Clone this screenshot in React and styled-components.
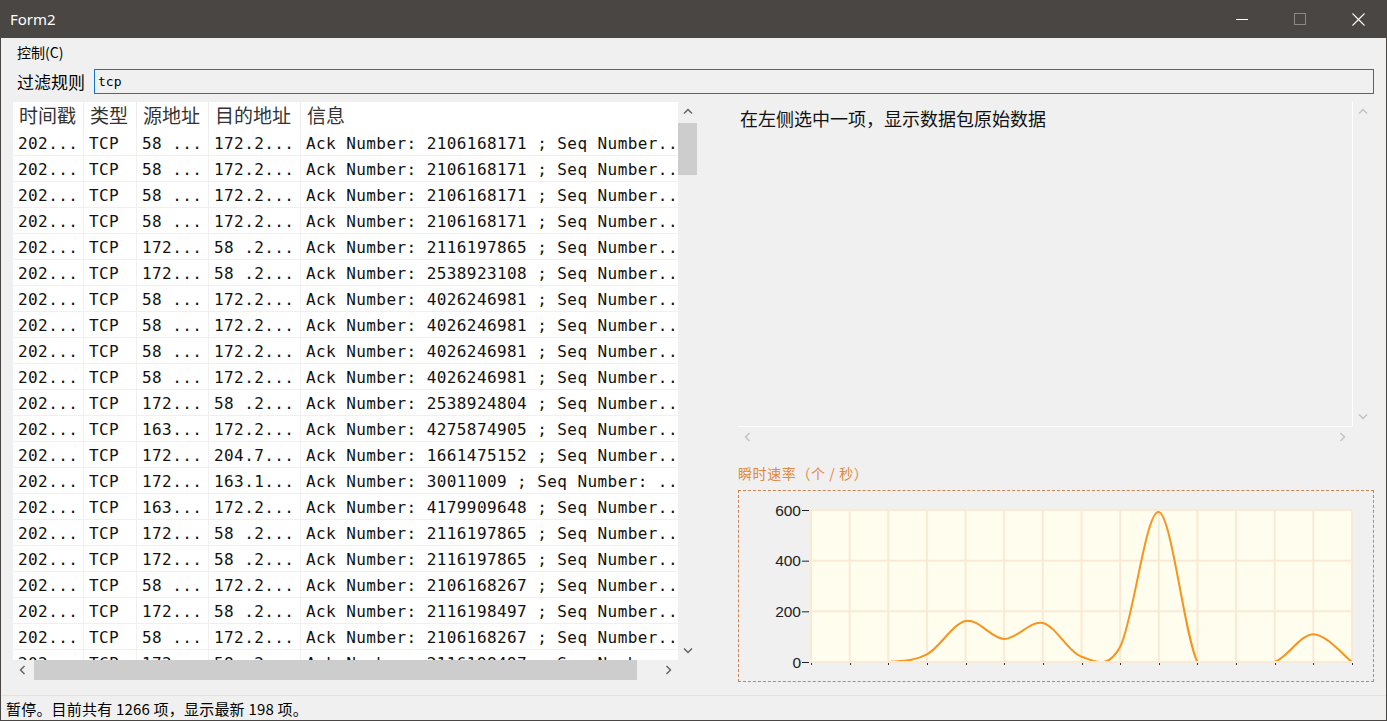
import React from 'react';
import styled, { createGlobalStyle } from 'styled-components';

const GlobalStyle = createGlobalStyle`
  html, body {
    margin: 0;
    padding: 0;
    background: #f0f0f0;
  }
  body {
    font-family: "Noto Sans CJK SC", "Noto Sans", sans-serif;
    overflow: hidden;
  }
`;

// window frame
const Window = styled.div`
  width: 1387px;
  height: 721px;
  box-sizing: border-box;
  border: 1px solid #4a4643;
  border-top: none;
  background: #f0f0f0;
  display: flex;
  flex-direction: column;
  overflow: hidden;
`;

const TitleBar = styled.div`
  height: 38px;
  flex: none;
  margin: 0 -1px;
  background: #4a4643;
  display: flex;
  align-items: center;
`;

const TitleText = styled.div`
  flex: 1;
  padding-left: 10px;
  color: #fff;
  font-family: "Noto Sans", "Open Sans", sans-serif;
  font-size: 15px;
`;

const TitleButton = styled.div`
  width: 58px;
  height: 38px;
  display: flex;
  align-items: center;
  justify-content: center;
`;

const MenuBar = styled.div`
  height: 28px;
  flex: none;
  display: flex;
  align-items: center;
  padding-left: 16px;
  font-size: 14px;
  color: #000;
`;

const FilterRow = styled.div`
  flex: none;
  display: flex;
  align-items: center;
  padding: 3px 12px 0 16px;
`;

const FilterLabel = styled.div`
  width: 77px;
  font-size: 17px;
  color: #000;
`;

const FilterInput = styled.div`
  flex: 1;
  height: 25px;
  box-sizing: border-box;
  border: 1px solid #0a78cf;
  background: #f0f0f0;
  padding-left: 3px;
  display: flex;
  align-items: center;
  font-family: "DejaVu Sans Mono", "Liberation Mono", monospace;
  font-size: 13px;
  color: #000;
`;

const Main = styled.div`
  flex: none;
  display: flex;
  gap: 41px;
  margin-top: 8px;
  padding-left: 12px;
  height: 580px;
`;

// left list view
const ListPanel = styled.div`
  width: 684px;
  height: 578px;
  display: grid;
  grid-template-columns: 665px 19px;
  grid-template-rows: 558px 20px;
`;

const Viewport = styled.div`
  background: #fff;
  overflow: hidden;
`;

const cols = '71px 53px 72px 92px 377px';

const HeaderRow = styled.div`
  display: grid;
  grid-template-columns: ${cols};
  height: 28px;
`;

const HeaderCell = styled.div`
  padding-left: 6px;
  font-size: 19px;
  line-height: 25px;
  color: #333;
  white-space: nowrap;
  overflow: hidden;
  border-right: ${({ last }) => (last ? 'none' : '1px solid #ececec')};
`;

const Row = styled.div`
  display: grid;
  grid-template-columns: ${cols};
  height: 26px;
  box-sizing: border-box;
  border-bottom: 1px solid #f0f0f0;
`;

const Cell = styled.div`
  padding: 2px 0 0 5px;
  font-family: "DejaVu Sans Mono", "Liberation Mono", monospace;
  font-size: 16px;
  letter-spacing: 0.42px;
  line-height: 23px;
  color: #111;
  white-space: nowrap;
  overflow: hidden;
  border-right: ${({ last }) => (last ? 'none' : '1px solid #f0f0f0')};
`;

const VScroll = styled.div`
  background: #f0f0f0;
  display: flex;
  flex-direction: column;
  box-sizing: border-box;
  border-left: ${({ edge }) => (edge ? '1px solid #fff' : 'none')};
`;

const HScroll = styled.div`
  background: #f0f0f0;
  display: flex;
  align-items: stretch;
  box-sizing: border-box;
  border-top: ${({ edge }) => (edge ? '1px solid #fff' : 'none')};
`;

const ArrowBox = styled.div`
  flex: none;
  width: ${({ w }) => w || 19}px;
  height: ${({ h }) => h || 20}px;
  display: flex;
  align-items: center;
  justify-content: center;
`;

const VThumb = styled.div`
  margin-top: 1px;
  height: 52px;
  background: #cdcdcd;
`;

const HThumb = styled.div`
  margin-left: 1px;
  width: 603px;
  background: #cdcdcd;
`;

const Spacer = styled.div`
  flex: 1;
`;

const Corner = styled.div`
  background: #f0f0f0;
`;

// right side
const RightColumn = styled.div`
  width: 636px;
  display: flex;
  flex-direction: column;
`;

const RawPanel = styled.div`
  width: 634px;
  height: 344px;
  display: grid;
  grid-template-columns: 614px 20px;
  grid-template-rows: 324px 20px;
`;

const RawText = styled.div`
  padding: 4px 2px;
  font-size: 18px;
  line-height: 24px;
  color: #111;
`;

const ChartLabel = styled.div`
  margin-top: 18px;
  font-size: 14px;
  letter-spacing: 0.6px;
  line-height: 18px;
  color: #e0883c;
`;

const ChartBox = styled.div`
  margin-top: 8px;
  width: 636px;
  height: 192px;
  box-sizing: border-box;
  border: 1px dashed #c98454;
`;

const StatusBar = styled.div`
  margin-top: auto;
  height: 25px;
  flex: none;
  box-sizing: border-box;
  border-top: 1px solid #e2e2e2;
  padding-left: 5px;
  display: flex;
  align-items: center;
  font-size: 15px;
  letter-spacing: 0.2px;
  color: #000;
`;

const Chevron = ({ dir, color = '#606060' }) => {
  const pts = {
    up: '1,6.5 5,2.5 9,6.5',
    down: '1,3.5 5,7.5 9,3.5',
    left: '6.5,1 2.5,5 6.5,9',
    right: '3.5,1 7.5,5 3.5,9',
  }[dir];
  return (
    <svg width="10" height="10" viewBox="0 0 10 10">
      <polyline points={pts} fill="none" stroke={color} strokeWidth="1.4" />
    </svg>
  );
};

const rows = [
  ['202...', 'TCP', '58 ...', '172.2...', 'Ack Number: 2106168171 ; Seq Number..'],
  ['202...', 'TCP', '58 ...', '172.2...', 'Ack Number: 2106168171 ; Seq Number..'],
  ['202...', 'TCP', '58 ...', '172.2...', 'Ack Number: 2106168171 ; Seq Number..'],
  ['202...', 'TCP', '58 ...', '172.2...', 'Ack Number: 2106168171 ; Seq Number..'],
  ['202...', 'TCP', '172...', '58 .2...', 'Ack Number: 2116197865 ; Seq Number..'],
  ['202...', 'TCP', '172...', '58 .2...', 'Ack Number: 2538923108 ; Seq Number..'],
  ['202...', 'TCP', '58 ...', '172.2...', 'Ack Number: 4026246981 ; Seq Number..'],
  ['202...', 'TCP', '58 ...', '172.2...', 'Ack Number: 4026246981 ; Seq Number..'],
  ['202...', 'TCP', '58 ...', '172.2...', 'Ack Number: 4026246981 ; Seq Number..'],
  ['202...', 'TCP', '58 ...', '172.2...', 'Ack Number: 4026246981 ; Seq Number..'],
  ['202...', 'TCP', '172...', '58 .2...', 'Ack Number: 2538924804 ; Seq Number..'],
  ['202...', 'TCP', '163...', '172.2...', 'Ack Number: 4275874905 ; Seq Number..'],
  ['202...', 'TCP', '172...', '204.7...', 'Ack Number: 1661475152 ; Seq Number..'],
  ['202...', 'TCP', '172...', '163.1...', 'Ack Number: 30011009 ; Seq Number: ..'],
  ['202...', 'TCP', '163...', '172.2...', 'Ack Number: 4179909648 ; Seq Number..'],
  ['202...', 'TCP', '172...', '58 .2...', 'Ack Number: 2116197865 ; Seq Number..'],
  ['202...', 'TCP', '172...', '58 .2...', 'Ack Number: 2116197865 ; Seq Number..'],
  ['202...', 'TCP', '58 ...', '172.2...', 'Ack Number: 2106168267 ; Seq Number..'],
  ['202...', 'TCP', '172...', '58 .2...', 'Ack Number: 2116198497 ; Seq Number..'],
  ['202...', 'TCP', '58 ...', '172.2...', 'Ack Number: 2106168267 ; Seq Number..'],
  ['202...', 'TCP', '172...', '58 .2...', 'Ack Number: 2116198497 ; Seq Number..'],
];

const headers = ['时间戳', '类型', '源地址', '目的地址', '信息'];

// rate chart
const rates = [0, 0, 0, 30, 162, 91, 154, 21, 60, 592, 0, 0, 0, 110, 0];
const PX0 = 72;
const PX1 = 613;
const PY0 = 19;
const PY1 = 171;
const step = (PX1 - PX0) / (rates.length - 1);
const px = (i) => PX0 + i * step;
const py = (v) => PY1 - (v * (PY1 - PY0)) / 600;

function splinePath(vals) {
  const pts = vals.map((v, i) => [px(i), py(v)]);
  let d = `M${pts[0][0]},${pts[0][1]}`;
  for (let i = 0; i < pts.length - 1; i++) {
    const p0 = pts[i - 1] || pts[i];
    const p1 = pts[i];
    const p2 = pts[i + 1];
    const p3 = pts[i + 2] || p2;
    const c1 = [p1[0] + (p2[0] - p0[0]) / 6, p1[1] + (p2[1] - p0[1]) / 6];
    const c2 = [p2[0] - (p3[0] - p1[0]) / 6, p2[1] - (p3[1] - p1[1]) / 6];
    d += ` C${c1[0]},${c1[1]} ${c2[0]},${c2[1]} ${p2[0]},${p2[1]}`;
  }
  return d;
}

function RateChart() {
  const yTicks = [600, 400, 200, 0];
  return (
    <svg width="634" height="190" viewBox="0 0 634 190">
      <defs>
        <clipPath id="plotClip">
          <rect x={PX0} y={0} width={PX1 - PX0} height={PY1 - 1} />
        </clipPath>
      </defs>
      <rect x={PX0} y={PY0} width={PX1 - PX0} height={PY1 - PY0} fill="#fffdee" />
      {rates.map((_, i) => (
        <line key={'v' + i} x1={px(i)} x2={px(i)} y1={PY0} y2={PY1} stroke="#f8ead5" strokeWidth="2" />
      ))}
      {yTicks.map((t) => (
        <line key={'h' + t} x1={PX0} x2={PX1} y1={py(t)} y2={py(t)} stroke="#f8ead5" strokeWidth="2" />
      ))}
      {yTicks.map((t) => (
        <g key={'t' + t}>
          <text
            x="62"
            y={py(t) + 5.5}
            textAnchor="end"
            fontFamily="Liberation Sans, Arial, sans-serif"
            fontSize="15.5"
            fill="#222"
          >
            {t}
          </text>
          <line x1="63" x2="70" y1={py(t) + 0.5} y2={py(t) + 0.5} stroke="#222" strokeWidth="1" />
        </g>
      ))}
      {rates.map((_, i) => (
        <line key={'x' + i} x1={Math.round(px(i)) + 0.5} x2={Math.round(px(i)) + 0.5} y1={172} y2={174} stroke="#333" strokeWidth="1" />
      ))}
      <path d={splinePath(rates)} fill="none" stroke="#f7941d" strokeWidth="2" clipPath="url(#plotClip)" />
    </svg>
  );
}

export default function App() {
  return (
    <>
      <GlobalStyle />
      <Window>
        <TitleBar>
          <TitleText>Form2</TitleText>
          <TitleButton>
            <svg width="12" height="12" viewBox="0 0 12 12">
              <line x1="0" x2="12" y1="6.5" y2="6.5" stroke="#fff" strokeWidth="1" />
            </svg>
          </TitleButton>
          <TitleButton>
            <svg width="12" height="12" viewBox="0 0 12 12">
              <rect x="0.5" y="0.5" width="11" height="11" fill="none" stroke="#8c8a88" strokeWidth="1" />
            </svg>
          </TitleButton>
          <TitleButton>
            <svg width="13" height="13" viewBox="0 0 13 13">
              <path d="M0.5 0.5 L12.5 12.5 M12.5 0.5 L0.5 12.5" stroke="#fff" strokeWidth="1.1" />
            </svg>
          </TitleButton>
        </TitleBar>

        <MenuBar>控制(C)</MenuBar>

        <FilterRow>
          <FilterLabel>过滤规则</FilterLabel>
          <FilterInput>tcp</FilterInput>
        </FilterRow>

        <Main>
          <ListPanel>
            <Viewport>
              <HeaderRow>
                {headers.map((h, i) => (
                  <HeaderCell key={h} last={i === headers.length - 1}>
                    {h}
                  </HeaderCell>
                ))}
              </HeaderRow>
              {rows.map((r, ri) => (
                <Row key={ri}>
                  {r.map((c, ci) => (
                    <Cell key={ci} last={ci === r.length - 1}>
                      {c}
                    </Cell>
                  ))}
                </Row>
              ))}
            </Viewport>
            <VScroll>
              <ArrowBox>
                <Chevron dir="up" />
              </ArrowBox>
              <VThumb />
              <Spacer />
              <ArrowBox>
                <Chevron dir="down" />
              </ArrowBox>
            </VScroll>
            <HScroll>
              <ArrowBox w={20} h={20}>
                <Chevron dir="left" />
              </ArrowBox>
              <HThumb />
              <Spacer />
              <ArrowBox w={20} h={20}>
                <Chevron dir="right" />
              </ArrowBox>
            </HScroll>
            <Corner />
          </ListPanel>

          <RightColumn>
            <RawPanel>
              <RawText>在左侧选中一项，显示数据包原始数据</RawText>
              <VScroll edge>
                <ArrowBox>
                  <Chevron dir="up" color="#c2c2c2" />
                </ArrowBox>
                <Spacer />
                <ArrowBox>
                  <Chevron dir="down" color="#c2c2c2" />
                </ArrowBox>
              </VScroll>
              <HScroll edge>
                <ArrowBox w={20} h={19}>
                  <Chevron dir="left" color="#c2c2c2" />
                </ArrowBox>
                <Spacer />
                <ArrowBox w={20} h={19}>
                  <Chevron dir="right" color="#c2c2c2" />
                </ArrowBox>
              </HScroll>
              <Corner />
            </RawPanel>
            <ChartLabel>瞬时速率（个 / 秒）</ChartLabel>
            <ChartBox>
              <RateChart />
            </ChartBox>
          </RightColumn>
        </Main>

        <StatusBar>暂停。目前共有 1266 项，显示最新 198 项。</StatusBar>
      </Window>
    </>
  );
}
